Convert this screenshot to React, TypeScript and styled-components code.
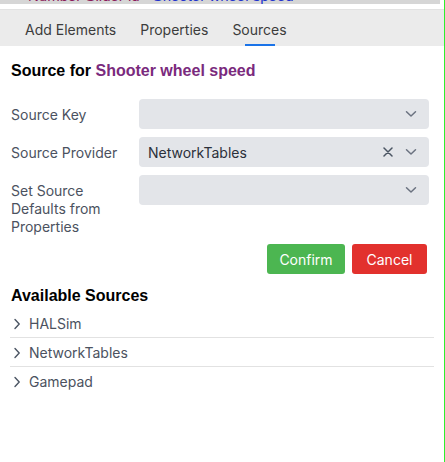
import React, { FC } from 'react'
import styled, { createGlobalStyle } from 'styled-components'

const GlobalStyle = createGlobalStyle`
	body {
		margin: 0;
		background: #ffffff;
		font-family: Inter, "Noto Sans", sans-serif;
	}
`

const tabs = ['Add Elements', 'Properties', 'Sources']
const sources = ['HALSim', 'NetworkTables', 'Gamepad']

const ChevronDown: FC = () => (
	<svg width="12" height="8" viewBox="0 0 12 8" fill="none">
		<path d="M1.5 1.8 L6 6 L10.5 1.8" stroke="#6b7280" strokeWidth="1.5" strokeLinecap="round" strokeLinejoin="round" />
	</svg>
)

const ChevronRight: FC = () => (
	<svg width="8" height="12" viewBox="0 0 8 12" fill="none">
		<path d="M2 1.5 L6.2 6 L2 10.5" stroke="#4b5563" strokeWidth="1.4" strokeLinecap="round" strokeLinejoin="round" />
	</svg>
)

const Cross: FC = () => (
	<svg width="10" height="10" viewBox="0 0 10 10" fill="none">
		<path d="M1 1 L9 9 M9 1 L1 9" stroke="#4b5563" strokeWidth="1.5" strokeLinecap="round" />
	</svg>
)

const App: FC = () => {
	return (
		<Page>
			<GlobalStyle />
			<TopBar>
				<TopText>
					<ElementName>Number Slider id=</ElementName> <ElementId>Shooter wheel speed</ElementId>
				</TopText>
			</TopBar>
			<TabBar>
				{tabs.map((tab) => (
					<Tab key={tab} active={tab === 'Sources'}>{tab}</Tab>
				))}
			</TabBar>
			<Content>
				<Heading>
					Source for <Accent>Shooter wheel speed</Accent>
				</Heading>
				<Form>
					<Label>Source Key</Label>
					<Select>
						<SelectValue />
						<ChevronDown />
					</Select>
					<Label>Source Provider</Label>
					<Select>
						<SelectValue>NetworkTables</SelectValue>
						<ClearIcon><Cross /></ClearIcon>
						<ChevronDown />
					</Select>
					<Label>Set Source Defaults from Properties</Label>
					<Select>
						<SelectValue />
						<ChevronDown />
					</Select>
				</Form>
				<Actions>
					<Button color="#4cb651" width={78}>Confirm</Button>
					<Button color="#e2312d" width={75}>Cancel</Button>
				</Actions>
				<SubHeading>Available Sources</SubHeading>
				<SourceList>
					{sources.map((source) => (
						<SourceItem key={source}>
							<ChevronRight />
							{source}
						</SourceItem>
					))}
				</SourceList>
			</Content>
		</Page>
	)
}

export default App

const Page = styled.div`
	width: 444px;
	height: 462px;
	border-right: 1px solid #2ef02e;
	background: #ffffff;
	overflow: hidden;
`

const TopBar = styled.div`
	width: 440px;
	height: 4px;
	background: #d6d6d6;
	overflow: hidden;
	margin-bottom: 5px;
`

const TopText = styled.div`
	margin-top: -12px;
	padding-left: 28px;
	font-family: "Liberation Sans", Arial, sans-serif;
	font-size: 15px;
	line-height: 15px;
`

const ElementName = styled.span`
	color: #8a1a5a;
`

const ElementId = styled.span`
	color: #2233cc;
`

const TabBar = styled.div`
	display: flex;
	height: 36px;
	padding-left: 13px;
	background: #ebebeb;
	border-top: 1px solid #e2e2e2;
`

const Tab = styled.div<{ active?: boolean }>`
	position: relative;
	display: flex;
	align-items: center;
	padding: 3px 12px 0;
	font-size: 14px;
	color: #3c3c3c;

	&::after {
		content: '';
		position: absolute;
		left: 50%;
		bottom: 0;
		width: 30px;
		height: 2px;
		margin-left: -15px;
		background: ${(p) => (p.active ? '#1a73e8' : 'transparent')};
	}
`

const Content = styled.div`
	padding: 15px 14px 0 11px;
`

const Heading = styled.div`
	font-family: "Liberation Sans", Arial, sans-serif;
	font-weight: 700;
	font-size: 16px;
	line-height: 20px;
	color: #000000;
`

const Accent = styled.span`
	color: #7a2a7d;
`

const Form = styled.div`
	display: grid;
	grid-template-columns: 128px 1fr;
	row-gap: 8px;
	margin-top: 18px;
	padding-right: 1px;
`

const Label = styled.div`
	padding: 7px 10px 0 0;
	font-size: 14px;
	line-height: 18px;
	color: #4b5260;
`

const Select = styled.div`
	display: flex;
	align-items: center;
	gap: 12px;
	height: 30px;
	padding: 0 12px 0 9px;
	background: #e3e5e9;
	border-radius: 4px;
	box-sizing: border-box;
`

const SelectValue = styled.div`
	flex: 1;
	font-size: 14px;
	color: #2b303a;
`

const ClearIcon = styled.div`
	display: flex;
	align-items: center;
`

const Actions = styled.div`
	display: flex;
	justify-content: flex-end;
	gap: 7px;
	margin-top: 8px;
	padding-right: 3px;
`

const Button = styled.button<{ color: string; width: number }>`
	width: ${(p) => p.width}px;
	height: 30px;
	padding: 0;
	border: none;
	border-radius: 3px;
	background: ${(p) => p.color};
	color: #ffffff;
	font-family: Inter, sans-serif;
	font-size: 14px;
`

const SubHeading = styled.div`
	margin-top: 12px;
	font-family: "Liberation Sans", Arial, sans-serif;
	font-weight: 700;
	font-size: 16px;
	line-height: 20px;
	color: #000000;
`

const SourceList = styled.div`
	margin-top: 3px;
	margin-left: -1px;
	margin-right: -4px;
`

const SourceItem = styled.div`
	display: flex;
	align-items: center;
	gap: 8px;
	padding: 6px 0 4px 3px;
	font-size: 14px;
	line-height: 18px;
	color: #4b5260;

	& + & {
		border-top: 1px solid #e2e2e2;
	}
`
